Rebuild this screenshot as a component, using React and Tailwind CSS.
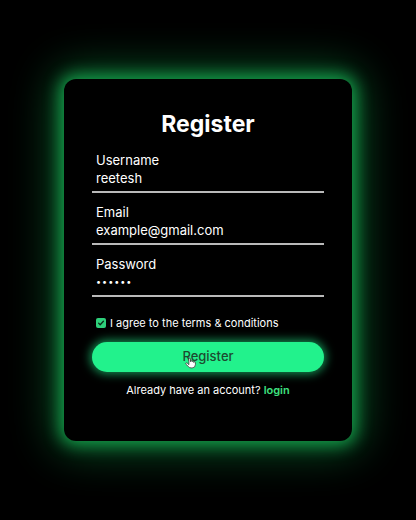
import { useState } from 'react';

function Field({ label, value, type = 'text' }) {
  return (
    <div className="flex flex-col border-b-2 border-[#b9b9b9] pb-1">
      <label className="pl-1 text-[13px] leading-[18px] text-white">{label}</label>
      <div
        className={
          type === 'password'
            ? 'pl-1 text-[9px] leading-[18px] tracking-[1px] text-white'
            : 'pl-1 text-[13px] leading-[18px] text-white'
        }
      >
        {value}
      </div>
    </div>
  );
}

export default function App() {
  const [agree, setAgree] = useState(true);

  return (
    <div
      className="min-h-[520px] w-full bg-black flex items-center justify-center"
      style={{ fontFamily: 'Inter, "Open Sans", sans-serif' }}
    >
      <div className="w-[288px] h-[362px] rounded-[12px] bg-black shadow-[0_0_16px_4px_rgba(22,170,80,0.9),0_0_44px_10px_rgba(18,150,70,0.55)] px-7 pt-[29px] flex flex-col">
        <h1 className="text-center text-[23px] leading-[32px] font-bold text-white">Register</h1>

        <div className="mt-[11px] flex flex-col gap-[10px]">
          <Field label="Username" value="reetesh" />
          <Field label="Email" value="example@gmail.com" />
          <Field label="Password" value="••••••" type="password" />
        </div>

        <label className="mt-[19px] pl-1 flex items-center gap-[4px] text-[11px] leading-[14px] text-white">
          <span
            onClick={() => setAgree(!agree)}
            className="w-[10px] h-[10px] rounded-[2px] bg-[#2ecf7a] flex items-center justify-center"
          >
            {agree && (
              <svg viewBox="0 0 10 10" className="w-[8px] h-[8px]">
                <path d="M2 5.2l2 2 4-4.4" fill="none" stroke="#0b2a17" strokeWidth="1.6" strokeLinecap="round" strokeLinejoin="round" />
              </svg>
            )}
          </span>
          I agree to the terms &amp; conditions
        </label>

        <button className="relative mt-[12px] h-[30px] w-full rounded-full bg-[#22f28c] shadow-[0_0_10px_2px_rgba(34,242,140,0.6)] text-[13px] text-[#1d4a30] font-medium">
          Register
          <svg viewBox="0 0 24 24" className="absolute left-[92px] top-[13px] w-[13px] h-[15px]">
            <path
              d="M9 11V5.5a1.5 1.5 0 0 1 3 0V11m0-1.5a1.5 1.5 0 0 1 3 0V11m0-.5a1.5 1.5 0 0 1 3 0v1.5a1.5 1.5 0 0 1 3 0V16a6 6 0 0 1-6 6h-2a6 6 0 0 1-5-2.7L3.4 15a1.6 1.6 0 0 1 2.6-1.8L9 16V11"
              fill="#ffffff"
              stroke="#333"
              strokeWidth="1.4"
              strokeLinejoin="round"
            />
          </svg>
        </button>

        <p className="mt-[10px] text-center text-[11px] leading-[16px] text-white">
          Already have an account? <a className="font-semibold text-[#3ee07f]">login</a>
        </p>
      </div>
    </div>
  );
}
